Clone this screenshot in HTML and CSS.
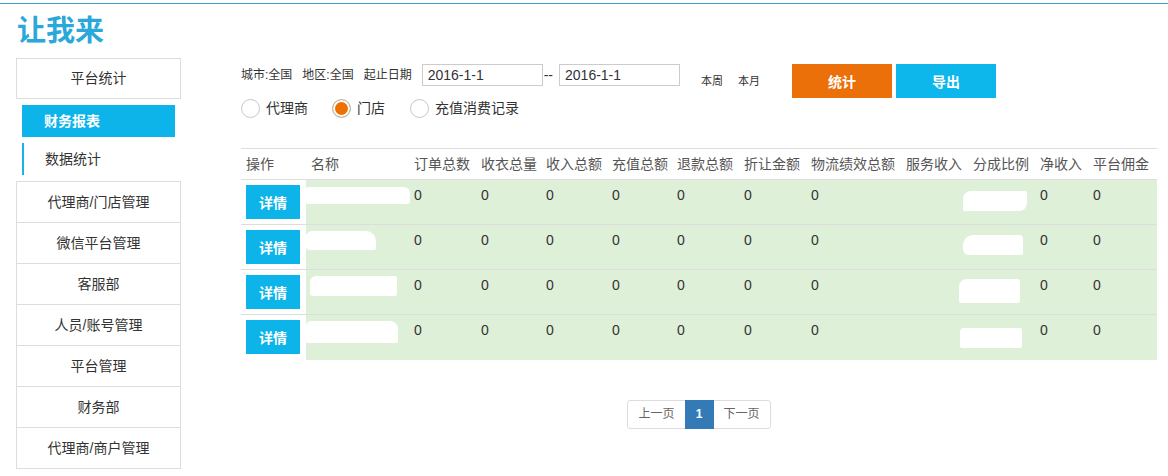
FILE: index.html
```html
<!DOCTYPE html>
<html lang="zh-CN">
<head>
<meta charset="utf-8">
<title>让我来</title>
<link rel="stylesheet" href="styles.css">
</head>
<body>
<div class="topline"></div>
<h1 class="logo">让我来</h1>
<div class="main">
  <aside class="sidebar">
    <div class="nav-top">平台统计</div>
    <div class="sub sub-active">财务报表</div>
    <div class="sub sub-cur">数据统计</div>
    <ul class="nav-group">
      <li>代理商/门店管理</li>
      <li>微信平台管理</li>
      <li>客服部</li>
      <li>人员/账号管理</li>
      <li>平台管理</li>
      <li>财务部</li>
      <li>代理商/商户管理</li>
    </ul>
  </aside>
  <section class="content">
    <div class="filters">
      <span class="lbl">城市:全国</span>
      <span class="lbl">地区:全国</span>
      <span class="lbl">起止日期</span>
      <input class="date" type="text" value="2016-1-1">
      <span class="dash">--</span>
      <input class="date" type="text" value="2016-1-1">
      <span class="quick q1">本周</span>
      <span class="quick q2">本月</span>
      <button class="btn btn-orange">统计</button>
      <button class="btn btn-blue">导出</button>
    </div>
    <div class="radios">
      <label class="radio"><span class="circle"></span>代理商</label>
      <label class="radio"><span class="circle on"></span>门店</label>
      <label class="radio"><span class="circle"></span>充值消费记录</label>
    </div>
    <table class="grid">
      <colgroup>
        <col class="c65"><col class="c103"><col class="c67"><col class="c65"><col class="c66"><col class="c65"><col class="c67"><col class="c67"><col class="c95"><col class="c67"><col class="c67"><col class="c53"><col class="c69">
      </colgroup>
      <thead>
        <tr><th>操作</th><th>名称</th><th>订单总数</th><th>收衣总量</th><th>收入总额</th><th>充值总额</th><th>退款总额</th><th>折让金额</th><th>物流绩效总额</th><th>服务收入</th><th>分成比例</th><th>净收入</th><th>平台佣金</th></tr>
      </thead>
      <tbody>
        <tr><td class="op"><button class="detail">详情</button></td><td><span class="blob n1"></span></td><td>0</td><td>0</td><td>0</td><td>0</td><td>0</td><td>0</td><td>0</td><td></td><td><span class="blob p1"></span></td><td>0</td><td>0</td></tr>
        <tr><td class="op"><button class="detail">详情</button></td><td><span class="blob n2"></span></td><td>0</td><td>0</td><td>0</td><td>0</td><td>0</td><td>0</td><td>0</td><td></td><td><span class="blob p2"></span></td><td>0</td><td>0</td></tr>
        <tr><td class="op"><button class="detail">详情</button></td><td><span class="blob n3"></span></td><td>0</td><td>0</td><td>0</td><td>0</td><td>0</td><td>0</td><td>0</td><td></td><td><span class="blob p3"></span></td><td>0</td><td>0</td></tr>
        <tr><td class="op"><button class="detail">详情</button></td><td><span class="blob n4"></span></td><td>0</td><td>0</td><td>0</td><td>0</td><td>0</td><td>0</td><td>0</td><td></td><td><span class="blob p4"></span></td><td>0</td><td>0</td></tr>
      </tbody>
    </table>
    <nav class="pager">
      <span class="pg">上一页</span><span class="pg active">1</span><span class="pg">下一页</span>
    </nav>
  </section>
</div>
</body>
</html>
```

FILE: styles.css
```css
* { box-sizing: border-box; }
html, body { margin: 0; padding: 0; background: #fff; }
body {
  font-family: "Liberation Sans", "Noto Sans CJK SC", sans-serif;
  color: #333;
  font-size: 14px;
  width: 1168px;
  height: 476px;
  overflow: hidden;
}
.topline { margin-top: 3px; height: 1px; background: #3fa3cc; }
.logo {
  margin: 9px 0 0 17px;
  font-size: 29px;
  line-height: 36px;
  font-weight: bold;
  color: #2aa8da;
  letter-spacing: 0;
}
.main { display: flex; margin-top: 9px; align-items: flex-start; }
.sidebar { width: 165px; margin-left: 16px; }
.nav-top {
  height: 41px;
  border: 1px solid #ddd;
  text-align: center;
  line-height: 39px;
  color: #333;
}
.sub { margin: 6px 6px 0 6px; height: 32px; line-height: 32px; }
.sub-active { background: #0cb4ea; color: #fff; font-weight: bold; padding-left: 22px; }
.sub-cur { border-left: 2px solid #1ab1e6; padding-left: 21px; color: #333; }
.nav-group { list-style: none; margin: 6px 0 0 0; padding: 0; border: 1px solid #ddd; }
.nav-group li {
  height: 41px;
  line-height: 40px;
  text-align: center;
  border-top: 1px solid #ddd;
  color: #333;
}
.nav-group li:first-child { border-top: 0; height: 40px; }
.content { margin-left: 60px; width: 916px; margin-top: 6px; }
.filters { display: flex; align-items: flex-start; height: 34px; }
.lbl { font-size: 12px; line-height: 22px; margin-right: 10px; color: #333; }
.date {
  width: 121px;
  height: 22px;
  border: 1px solid #ccc;
  padding: 0 0 0 5px;
  font-family: "Liberation Sans", sans-serif;
  font-size: 14px;
  color: #333;
  outline: none;
}
.dash { font-size: 14px; line-height: 22px; margin: 0 6px 0 1px; color: #333; }
.quick { font-size: 11px; line-height: 22px; margin-top: 6px; color: #333; }
.q1 { margin-left: 21px; }
.q2 { margin-left: 15px; }
.btn {
  border: 0;
  width: 100px;
  height: 34px;
  color: #fff;
  font-family: "Liberation Sans", "Noto Sans CJK SC", sans-serif;
  font-size: 14px;
  font-weight: bold;
  padding: 0;
}
.btn-orange { background: #eb7009; margin-left: 32px; }
.btn-blue { background: #0db7ec; margin-left: 4px; }
.radios { display: flex; align-items: center; height: 20px; }
.radio { display: flex; align-items: center; font-size: 14px; line-height: 20px; color: #333; margin-right: 24px; }
.circle {
  width: 19px;
  height: 19px;
  border: 1px solid #c8c8c8;
  border-radius: 50%;
  margin-right: 6px;
  background: #fff;
}
.circle.on { background: #ec7100; box-shadow: inset 0 0 0 2px #fff; border-color: #bbb; }
.radio:nth-child(2) { margin-right: 25px; }
.grid {
  margin-top: 30px;
  width: 916px;
  table-layout: fixed;
  border-collapse: collapse;
}
.c65 { width: 65px; } .c103 { width: 103px; } .c67 { width: 67px; } .c66 { width: 66px; }
.c95 { width: 95px; } .c53 { width: 53px; } .c69 { width: 69px; }
.grid th {
  text-align: left;
  font-weight: normal;
  color: #555;
  font-size: 14px;
  line-height: 20px;
  padding: 5px 0 5px 5px;
  border-top: 1px solid #ddd;
  border-bottom: 1px solid #ddd;
  white-space: nowrap;
  overflow: visible;
}
.grid td {
  background: #dff0d8;
  vertical-align: top;
  line-height: 20px;
  padding: 5px 0 5px 5px;
  border-top: 1px solid #ddd;
  color: #333;
  height: 45px;
}
.grid tbody tr:first-child td { border-top: 0; }
.grid td.op { background: #fff; padding-left: 5px; }
.detail {
  display: block;
  width: 54px;
  height: 34px;
  border: 0;
  padding: 0;
  background: #0cb4ea;
  color: #fff;
  font-family: "Liberation Sans", "Noto Sans CJK SC", sans-serif;
  font-weight: bold;
  font-size: 14px;
}
.blob { display: inline-block; background: #fff; vertical-align: top; }
.n1 { width: 104px; height: 17px; margin: 2px 0 0 -5px; border-radius: 2px 6px 3px 2px; }
.n2 { width: 70px; height: 19px; margin: 1px 0 0 -5px; border-radius: 6px 10px 2px 4px; }
.n3 { width: 87px; height: 20px; margin: 1px 0 0 -1px; border-radius: 6px 2px 2px 3px; }
.n4 { width: 92px; height: 22px; margin: 1px 0 0 -5px; border-radius: 5px 8px 2px 2px; }
.p1 { width: 64px; height: 20px; margin: 6px 0 0 -10px; border-radius: 8px 2px 8px 2px; }
.p2 { width: 60px; height: 20px; margin: 5px 0 0 -10px; border-radius: 10px 4px 2px 6px; }
.p3 { width: 61px; height: 24px; margin: 4px 0 0 -14px; border-radius: 8px 2px 2px 2px; }
.p4 { width: 62px; height: 20px; margin: 8px 0 0 -13px; border-radius: 4px 2px 2px 2px; }
.pager { display: flex; justify-content: center; margin-top: 40px; }
.pg {
  display: inline-block;
  height: 29px;
  line-height: 27px;
  padding: 0 10px;
  font-size: 12px;
  color: #666;
  border: 1px solid #ddd;
  margin-left: -1px;
  background: #fff;
}
.pg:first-child { border-radius: 3px 0 0 3px; margin-left: 0; }
.pg:last-child { border-radius: 0 3px 3px 0; }
.pg.active { background: #337ab7; border-color: #337ab7; color: #fff; font-weight: bold; width: 29px; text-align: center; padding: 0; position: relative; z-index: 1; }
```
